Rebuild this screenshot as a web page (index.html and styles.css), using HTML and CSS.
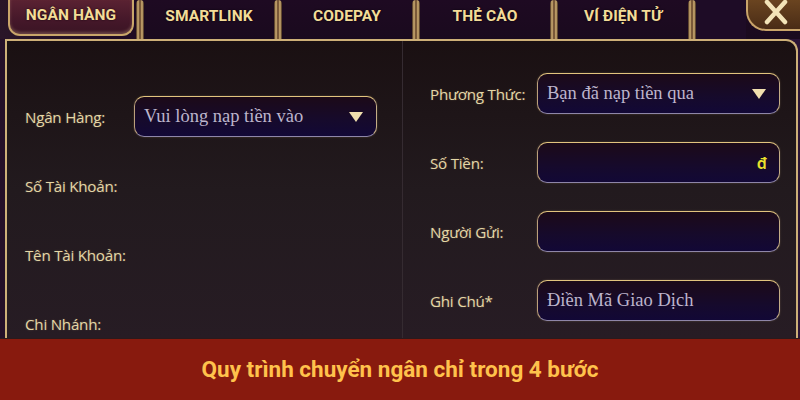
FILE: index.html
```html
<!DOCTYPE html>
<html lang="vi">
<head>
<meta charset="utf-8">
<title>Nạp tiền</title>
<link rel="stylesheet" href="styles.css">
</head>
<body>
<div class="screen">
  <div class="tabs">
    <div class="tab tab-active"><span class="tab-btn">NGÂN HÀNG</span></div>
    <div class="pillar"></div>
    <div class="tab"><span class="tab-label">SMARTLINK</span></div>
    <div class="pillar"></div>
    <div class="tab"><span class="tab-label">CODEPAY</span></div>
    <div class="pillar"></div>
    <div class="tab"><span class="tab-label">THẺ CÀO</span></div>
    <div class="pillar"></div>
    <div class="tab"><span class="tab-label">VÍ ĐIỆN TỬ</span></div>
    <div class="pillar"></div>
    <div class="tab-gap"></div>
    <div class="close">
      <svg width="28" height="26" viewBox="0 0 28 26">
        <path d="M5 3 L23 23 M23 3 L5 23" stroke="#f3e4b8" stroke-width="4.5" stroke-linecap="round" fill="none"/>
      </svg>
    </div>
  </div>

  <div class="panel">
    <div class="col col-left">
      <div class="row">
        <div class="label">Ngân Hàng:</div>
        <div class="field select"><span class="value">Vui lòng nạp tiền vào</span><span class="caret"></span></div>
      </div>
      <div class="row"><div class="label">Số Tài Khoản:</div></div>
      <div class="row"><div class="label">Tên Tài Khoản:</div></div>
      <div class="row"><div class="label">Chi Nhánh:</div></div>
    </div>
    <div class="col col-right">
      <div class="row">
        <div class="label">Phương Thức:</div>
        <div class="field select"><span class="value">Bạn đã nạp tiền qua</span><span class="caret"></span></div>
      </div>
      <div class="row">
        <div class="label">Số Tiền:</div>
        <div class="field money"><span class="currency">đ</span></div>
      </div>
      <div class="row">
        <div class="label">Người Gửi:</div>
        <div class="field"></div>
      </div>
      <div class="row">
        <div class="label">Ghi Chú*</div>
        <div class="field"><span class="value">Điền Mã Giao Dịch</span></div>
      </div>
    </div>
  </div>

  <div class="caption">Quy trình chuyển ngân chỉ trong 4 bước</div>
</div>
</body>
</html>
```

FILE: styles.css
```css
html, body {
  margin: 0;
  padding: 0;
  background: #1a0c1c;
}

.screen {
  width: 800px;
  height: 400px;
  overflow: hidden;
  display: flex;
  flex-direction: column;
  background: linear-gradient(90deg, #241028 0%, #1c0a20 50%, #2a1436 100%);
}

/* ---------- tabs ---------- */
.tabs {
  height: 39px;
  display: flex;
  flex-shrink: 0;
  background: linear-gradient(#1e0a22, #1a0a1e);
}

.tab {
  width: 130px;
  display: flex;
  align-items: center;
  justify-content: center;
  padding-bottom: 8px;
  box-sizing: border-box;
}

.tab-active {
  width: 136px;
  padding: 0 2px 3px 8px;
  align-items: stretch;
  background: linear-gradient(90deg, #2a1628, #1e0a22);
}

.tab-btn {
  flex: 1;
  display: flex;
  align-items: center;
  justify-content: center;
  padding-bottom: 4px;
  border: 2px solid #c9a66a;
  border-top: none;
  border-radius: 0 0 12px 12px;
  background: linear-gradient(#5a2232 0%, #46182a 55%, #3a1424 100%);
  box-shadow: inset 0 -2px 3px rgba(255, 220, 170, 0.25);
}

.tab-btn, .tab-label {
  font-family: Roboto, "Noto Sans", sans-serif;
  font-weight: 700;
  font-size: 15.5px;
  color: #f3dc98;
  letter-spacing: 0.1px;
  text-shadow: 0 0 2px rgba(0, 0, 0, 0.8);
}

.pillar {
  width: 8px;
  flex-shrink: 0;
  background: linear-gradient(90deg, #3a2418 0%, #d8b678 25%, #5a3a24 50%, #d8b678 75%, #3a2418 100%);
  border-radius: 4px 4px 0 0;
}

.tab-gap {
  width: 50px;
  background: #1e0c26;
}

.close {
  flex: 1;
  height: 31px;
  display: flex;
  align-items: center;
  justify-content: center;
  padding-left: 4px;
  padding-bottom: 6px;
  box-sizing: border-box;
  background: linear-gradient(#6a4420, #4a2c16);
  border-left: 2px solid #c9a46a;
  border-bottom: 2px solid #c9a46a;
  border-radius: 0 0 0 20px;
}

/* ---------- panel ---------- */
.panel {
  height: 299px;
  margin-left: 5px;
  width: 793px;
  box-sizing: border-box;
  flex-shrink: 0;
  overflow: hidden;
  display: flex;
  border: 2px solid #cdb078;
  border-bottom: none;
  border-top-right-radius: 12px;
  background: linear-gradient(#1a1012 0%, #221a1e 50%, #271c24 100%);
}

.col {
  display: flex;
  flex-direction: column;
}

.col-left {
  width: 396px;
  padding: 41px 0 0 18px;
  box-sizing: border-box;
  border-right: 1px solid #352b31;
}

.col-right {
  flex: 1;
  padding: 18px 0 0 27px;
  box-sizing: border-box;
}

.row {
  height: 69px;
  flex-shrink: 0;
  display: flex;
  align-items: center;
}

.label {
  font-family: "Open Sans", "Noto Sans", sans-serif;
  font-size: 15.2px;
  letter-spacing: -0.25px;
  color: #e4d6a6;
  text-shadow: 0 0 2px rgba(255, 230, 160, 0.25);
}

.col-left .label { width: 109px; }
.col-right .label { width: 107px; }

.field {
  width: 243px;
  height: 41px;
  box-sizing: border-box;
  display: flex;
  align-items: center;
  justify-content: space-between;
  padding: 0 12px 0 9px;
  border: 1.5px solid;
  border-color: #e2c47e #c4ad86 #8e86a8 #bba07c;
  border-radius: 10px;
  background: linear-gradient(#1c0a18 0%, #160a2c 60%, #120836 100%);
  box-shadow: 0 0 2px rgba(220, 190, 130, 0.3);
}

.value {
  font-family: "Liberation Serif", "DejaVu Serif", serif;
  font-size: 18.5px;
  color: #bdb5cc;
}

.caret {
  width: 0;
  height: 0;
  margin-right: 1px;
  border-left: 7px solid transparent;
  border-right: 7px solid transparent;
  border-top: 10px solid #f0dfae;
}

.money {
  justify-content: flex-end;
}

.currency {
  font-family: "Noto Sans", sans-serif;
  font-size: 16px;
  font-weight: 600;
  color: #e8e02c;
}

/* ---------- caption ---------- */
.caption {
  flex: 1;
  display: flex;
  align-items: center;
  justify-content: center;
  padding-bottom: 2px;
  background: #881a0e;
  border-top: 1px solid #2a1a1c;
  font-family: Roboto, "Noto Sans", sans-serif;
  font-weight: 700;
  font-size: 22.5px;
  color: #ffc24c;
}
```
